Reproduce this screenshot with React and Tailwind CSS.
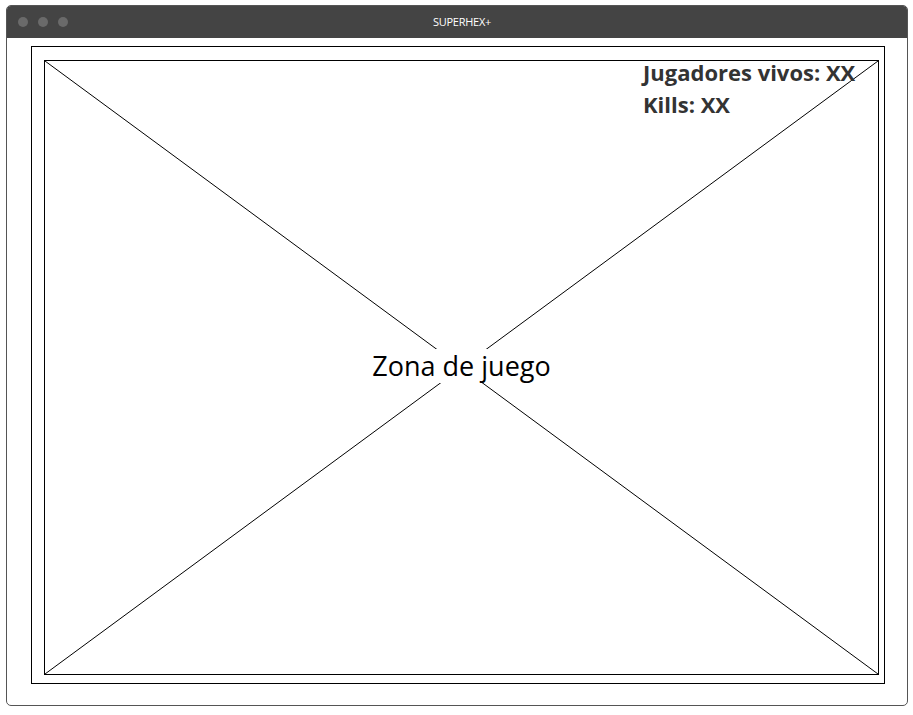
export default function App() {
  return (
    <div className="w-[913px] h-[715px] bg-white pt-[5px] pl-[6px]" style={{ fontFamily: '"Open Sans", "Noto Sans", sans-serif' }}>
      <div className="w-[902px] h-[701px] border border-[#555] rounded-[5px] overflow-hidden flex flex-col">
        {/* title bar */}
        <div className="h-[32px] bg-[#444] flex items-center relative shrink-0">
          <div className="flex gap-[10px] pl-[11px]">
            <span className="w-[10px] h-[10px] rounded-full bg-[#6a6a6a]" />
            <span className="w-[10px] h-[10px] rounded-full bg-[#6a6a6a]" />
            <span className="w-[10px] h-[10px] rounded-full bg-[#6a6a6a]" />
          </div>
          <div className="absolute inset-0 flex items-center justify-center pl-[10px] text-[11px] text-white tracking-tight">
            SUPERHEX+
          </div>
        </div>

        {/* body */}
        <div className="pt-[8px] pl-[24px]">
          <div className="w-[854px] h-[638px] border border-black pt-[13px] pl-[12px]">
            <div className="w-[835px] h-[615px] border border-black relative">
              <svg className="absolute inset-0 w-full h-full" viewBox="0 0 833 613" preserveAspectRatio="none">
                <line x1="0" y1="0" x2="833" y2="613" stroke="black" strokeWidth="1" />
                <line x1="833" y1="0" x2="0" y2="613" stroke="black" strokeWidth="1" />
              </svg>
              <div className="absolute inset-0 flex items-center justify-center">
                <div className="bg-white px-[4px] text-[27px] leading-[34px] text-black mb-[4px]">Zona de juego</div>
              </div>
              <div className="absolute left-[598px] top-[-5px] text-[22px] leading-[32px] font-bold text-[#333]">
                <div>Jugadores vivos: XX</div>
                <div>Kills: XX</div>
              </div>
            </div>
          </div>
        </div>
      </div>
    </div>
  );
}
